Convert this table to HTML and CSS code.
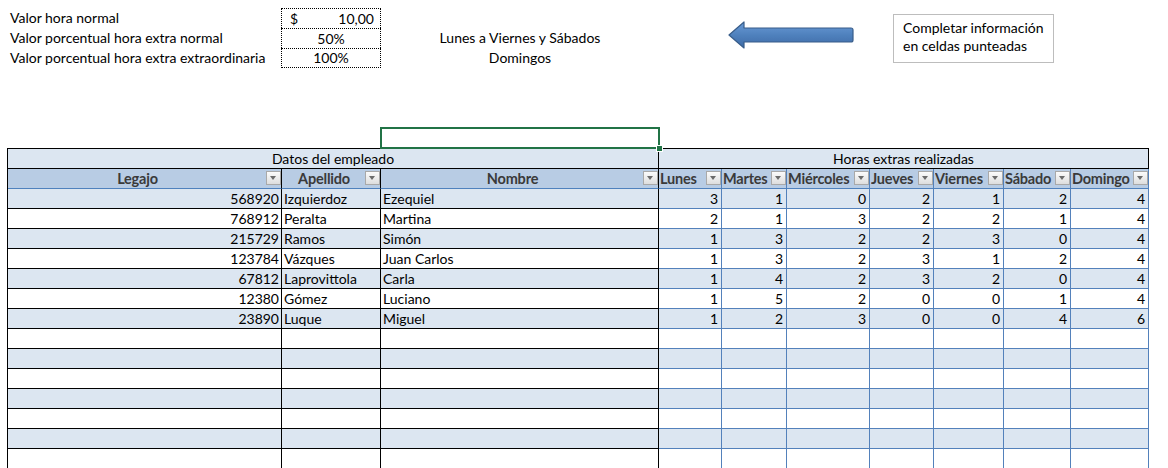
FILE: index.html
```html
<!DOCTYPE html>
<html lang="es">
<head>
<meta charset="utf-8">
<title>Horas extras</title>
<link rel="stylesheet" href="styles.css">
</head>
<body>
<div class="page">
  <section class="params">
    <div class="pgrid">
      <div class="lbl">Valor hora normal</div>
      <div class="inp inp-first money"><span>$</span><span>10,00</span></div>
      <div class="blank"></div>

      <div class="lbl">Valor porcentual hora extra normal</div>
      <div class="inp">50%</div>
      <div class="desc">Lunes a Viernes y Sábados</div>

      <div class="lbl">Valor porcentual hora extra extraordinaria</div>
      <div class="inp inp-last">100%</div>
      <div class="desc">Domingos</div>

      <div class="selected"></div>
    </div>

    <svg class="arrow" width="132" height="32" viewBox="0 0 132 32" aria-hidden="true">
      <defs>
        <linearGradient id="ag" x1="0" y1="0" x2="0" y2="1">
          <stop offset="0" stop-color="#6a9ad6"/>
          <stop offset="0.5" stop-color="#4f81bd"/>
          <stop offset="1" stop-color="#3d6aa6"/>
        </linearGradient>
      </defs>
      <path d="M2 15 L17 2 L17 8 L124 8 Q126 8 126 10 L126 20 Q126 22 124 22 L17 22 L17 28 Z" fill="url(#ag)" stroke="#385d8a" stroke-width="1.2" stroke-linejoin="round"/>
    </svg>

    <div class="callout">Completar información<br>en celdas punteadas</div>
  </section>

  <section class="sheet">
    <div class="c grp">Datos del empleado</div>
    <div class="c grp grp-r">Horas extras realizadas</div>

    <div class="c hd"><span class="t">Legajo</span><span class="dd"></span></div>
    <div class="c hd"><span class="t">Apellido</span><span class="dd"></span></div>
    <div class="c hd"><span class="t">Nombre</span><span class="dd"></span></div>
    <div class="c hd hr"><span class="t">Lunes</span><span class="dd"></span></div>
    <div class="c hd hr"><span class="t">Martes</span><span class="dd"></span></div>
    <div class="c hd hr"><span class="t">Miércoles</span><span class="dd"></span></div>
    <div class="c hd hr"><span class="t">Jueves</span><span class="dd"></span></div>
    <div class="c hd hr"><span class="t">Viernes</span><span class="dd"></span></div>
    <div class="c hd hr"><span class="t">Sábado</span><span class="dd"></span></div>
    <div class="c hd hr"><span class="t">Domingo</span><span class="dd"></span></div>

    <div class="row alt">
      <div class="c num">568920</div><div class="c">Izquierdoz</div><div class="c">Ezequiel</div>
      <div class="c h">3</div><div class="c h">1</div><div class="c h">0</div><div class="c h">2</div><div class="c h">1</div><div class="c h">2</div><div class="c h">4</div>
    </div>
    <div class="row">
      <div class="c num">768912</div><div class="c">Peralta</div><div class="c">Martina</div>
      <div class="c h">2</div><div class="c h">1</div><div class="c h">3</div><div class="c h">2</div><div class="c h">2</div><div class="c h">1</div><div class="c h">4</div>
    </div>
    <div class="row alt">
      <div class="c num">215729</div><div class="c">Ramos</div><div class="c">Simón</div>
      <div class="c h">1</div><div class="c h">3</div><div class="c h">2</div><div class="c h">2</div><div class="c h">3</div><div class="c h">0</div><div class="c h">4</div>
    </div>
    <div class="row">
      <div class="c num">123784</div><div class="c">Vázques</div><div class="c">Juan Carlos</div>
      <div class="c h">1</div><div class="c h">3</div><div class="c h">2</div><div class="c h">3</div><div class="c h">1</div><div class="c h">2</div><div class="c h">4</div>
    </div>
    <div class="row alt">
      <div class="c num">67812</div><div class="c">Laprovittola</div><div class="c">Carla</div>
      <div class="c h">1</div><div class="c h">4</div><div class="c h">2</div><div class="c h">3</div><div class="c h">2</div><div class="c h">0</div><div class="c h">4</div>
    </div>
    <div class="row">
      <div class="c num">12380</div><div class="c">Gómez</div><div class="c">Luciano</div>
      <div class="c h">1</div><div class="c h">5</div><div class="c h">2</div><div class="c h">0</div><div class="c h">0</div><div class="c h">1</div><div class="c h">4</div>
    </div>
    <div class="row alt">
      <div class="c num">23890</div><div class="c">Luque</div><div class="c">Miguel</div>
      <div class="c h">1</div><div class="c h">2</div><div class="c h">3</div><div class="c h">0</div><div class="c h">0</div><div class="c h">4</div><div class="c h">6</div>
    </div>

    <div class="row"><div class="c"></div><div class="c"></div><div class="c"></div><div class="c h"></div><div class="c h"></div><div class="c h"></div><div class="c h"></div><div class="c h"></div><div class="c h"></div><div class="c h"></div></div>
    <div class="row alt"><div class="c"></div><div class="c"></div><div class="c"></div><div class="c h"></div><div class="c h"></div><div class="c h"></div><div class="c h"></div><div class="c h"></div><div class="c h"></div><div class="c h"></div></div>
    <div class="row"><div class="c"></div><div class="c"></div><div class="c"></div><div class="c h"></div><div class="c h"></div><div class="c h"></div><div class="c h"></div><div class="c h"></div><div class="c h"></div><div class="c h"></div></div>
    <div class="row alt"><div class="c"></div><div class="c"></div><div class="c"></div><div class="c h"></div><div class="c h"></div><div class="c h"></div><div class="c h"></div><div class="c h"></div><div class="c h"></div><div class="c h"></div></div>
    <div class="row"><div class="c"></div><div class="c"></div><div class="c"></div><div class="c h"></div><div class="c h"></div><div class="c h"></div><div class="c h"></div><div class="c h"></div><div class="c h"></div><div class="c h"></div></div>
    <div class="row alt"><div class="c"></div><div class="c"></div><div class="c"></div><div class="c h"></div><div class="c h"></div><div class="c h"></div><div class="c h"></div><div class="c h"></div><div class="c h"></div><div class="c h"></div></div>
    <div class="row"><div class="c"></div><div class="c"></div><div class="c"></div><div class="c h"></div><div class="c h"></div><div class="c h"></div><div class="c h"></div><div class="c h"></div><div class="c h"></div><div class="c h"></div></div>
  </section>
</div>
</body>
</html>
```
FILE: styles.css
```css
html, body {
  margin: 0;
  padding: 0;
  background: #ffffff;
}

body {
  width: 1168px;
  height: 468px;
  overflow: hidden;
  font-family: "Lato", "Open Sans", sans-serif;
  font-size: 14px;
  color: #000000;
}

.page {
  display: flex;
  flex-direction: column;
}

/* ---------- parameter area ---------- */
.params {
  position: relative;
  height: 148px;
  box-sizing: border-box;
  padding: 8px 0 0 8px;
}

.pgrid {
  display: grid;
  grid-template-columns: 274px 99px 278px;
  grid-template-rows: repeat(7, 20px);
}

.lbl {
  grid-column: 1;
  padding-left: 2px;
  line-height: 20px;
  white-space: nowrap;
}

.inp {
  grid-column: 2;
  margin-left: -1px;
  border-left: 1px dotted #000;
  border-right: 1px dotted #000;
  border-top: 1px dotted #000;
  line-height: 19px;
  text-align: center;
  box-sizing: border-box;
}

.inp-last {
  border-bottom: 1px dotted #000;
  line-height: 18px;
}

.money {
  display: flex;
  justify-content: space-between;
  padding: 0 6px 0 8px;
}

.blank {
  grid-column: 3;
}

.desc {
  grid-column: 3;
  text-align: center;
  line-height: 20px;
  white-space: nowrap;
}

.selected {
  grid-column: 3;
  grid-row: 7;
  position: relative;
  outline: 2px solid #217346;
  outline-offset: -1px;
  z-index: 2;
}

.selected::after {
  content: "";
  position: absolute;
  right: -4px;
  bottom: -4px;
  width: 5px;
  height: 5px;
  background: #217346;
  border: 1px solid #ffffff;
}

.arrow {
  position: absolute;
  left: 727px;
  top: 20px;
}

.callout {
  position: absolute;
  left: 893px;
  top: 14px;
  width: 161px;
  height: 49px;
  box-sizing: border-box;
  border: 1px solid #bdbdbd;
  background: #ffffff;
  padding: 4px 0 0 9px;
  line-height: 18px;
  white-space: nowrap;
}

/* ---------- data sheet ---------- */
.sheet {
  display: grid;
  grid-template-columns: 274px 99px 278px 63px 65px 83px 64px 70px 67px 78px;
  grid-auto-rows: 20px;
  margin-left: 7px;
  width: max-content;
  border-top: 1px solid #000;
  border-left: 1px solid #000;
}

.row {
  display: contents;
}

.c {
  box-sizing: border-box;
  border-right: 1px solid #000;
  border-bottom: 1px solid #000;
  line-height: 19px;
  padding: 0 2px;
  white-space: nowrap;
  overflow: hidden;
  background: #ffffff;
}

.row.alt > .c {
  background: #dce6f1;
}

.num {
  text-align: right;
}

.h {
  text-align: right;
  border-right-color: #5381bb;
  border-bottom-color: #5381bb;
  padding-right: 3px;
}

.grp {
  grid-column: span 3;
  text-align: center;
  background: #dce6f1;
}

.grp-r {
  grid-column: span 7;
}

.hd {
  display: flex;
  align-items: flex-start;
  padding: 0 0 0 1px;
  background: #b8cce4;
  border-bottom-color: #4f81bd;
  font-weight: 700;
  font-size: 14.5px;
  color: #3a3a3a;
  overflow: visible;
}

.hd .t {
  flex: 1;
  min-width: 0;
  text-align: center;
  overflow: hidden;
  letter-spacing: -0.2px;
}

.hr {
  border-right-color: #5381bb;
}

.hr .t {
  text-align: left;
}

.dd {
  flex: none;
  width: 15px;
  height: 14px;
  margin-top: 2px;
  box-sizing: border-box;
  border: 1px solid #a9a9a9;
  background: linear-gradient(#fbfbfb, #dedede);
  position: relative;
}

.dd::after {
  content: "";
  position: absolute;
  left: 3px;
  top: 4px;
  border-left: 3.5px solid transparent;
  border-right: 3.5px solid transparent;
  border-top: 4px solid #6b6b6b;
}
```
